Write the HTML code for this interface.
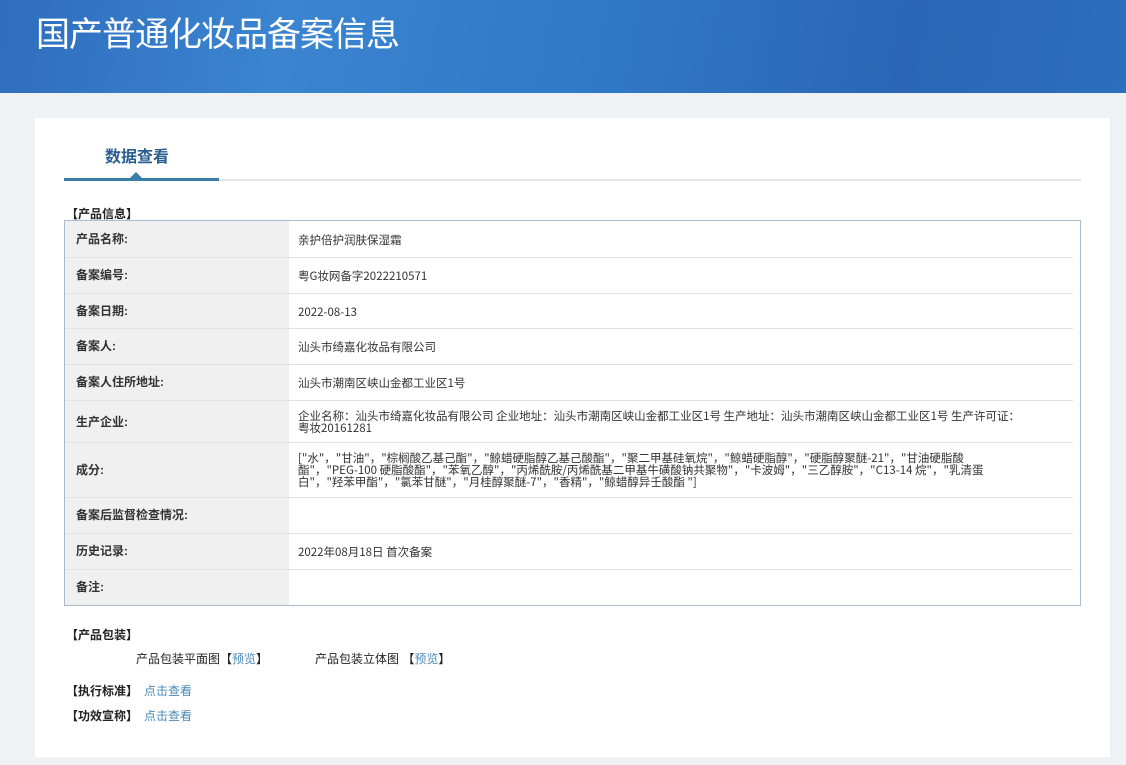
<!DOCTYPE html>
<html><head><meta charset="utf-8"><style>
*{margin:0;padding:0;box-sizing:border-box}
body{width:1126px;height:765px;overflow:hidden;background:#eef2f5;font-family:"Liberation Sans","Noto Sans CJK SC",sans-serif;color:#333;position:relative}
.hd{position:absolute;left:0;top:0;width:1126px;height:93px;background:linear-gradient(100deg,#2f6dbd 0%,#3a84d0 25%,#2f78c6 55%,#2a66b5 80%,#2c6fbd 100%)}
.hd h1{position:absolute;left:36px;top:7px;font-size:34px;font-weight:normal;color:#fff;letter-spacing:-1px;font-family:"Noto Sans CJK SC",sans-serif}
.card{position:absolute;left:35px;top:118px;width:1075px;height:639px;background:#fff}
.tab{position:absolute;left:105px;top:143px;font-size:16px;font-weight:bold;color:#2a5d8f}
.line{position:absolute;left:64px;top:179px;width:1017px;height:2px;background:#e3e6e9}
.act{position:absolute;left:64px;top:178px;width:155px;height:3px;background:#3a7fa8}
.tri{position:absolute;left:130px;top:172px;width:0;height:0;border-left:6px solid transparent;border-right:6px solid transparent;border-bottom:6px solid #3a7fa8}
.sec{position:absolute;font-size:12px;font-weight:bold;color:#222}
.tbl{position:absolute;left:64px;top:220px;width:1017px;height:386px;border:1px solid #aabbd0}
.lab{position:absolute;left:0;top:0;width:224px;height:384px;background:#f0f0f0}
.row{position:absolute;left:0;width:1008px;border-bottom:1px solid #e2e2e2}
.row .l{position:absolute;left:11px;font-size:12px;font-weight:bold;color:#333;line-height:14px}
.row .v{position:absolute;left:233px;font-size:11.5px;color:#333;line-height:12px;width:735px;font-family:"Noto Sans CJK SC",sans-serif}
.t{position:absolute;font-size:12px;color:#222}
.a{color:#4a8ab8}
</style></head><body>
<div class="hd"><h1>国产普通化妆品备案信息</h1></div>
<div class="card"></div>
<div class="tab">数据查看</div>
<div class="line"></div><div class="act"></div><div class="tri"></div>
<div class="sec" style="left:66px;top:205px">【产品信息】</div>
<div class="tbl">
<div class="lab"></div>
<div class="row" style="top:0;height:37px"><span class="l" style="top:11px">产品名称:</span><span class="v" style="top:13px">亲护倍护润肤保湿霜</span></div>
<div class="row" style="top:37px;height:36px"><span class="l" style="top:10px">备案编号:</span><span class="v" style="top:12px">粤G妆网备字2022210571</span></div>
<div class="row" style="top:73px;height:35px"><span class="l" style="top:10px">备案日期:</span><span class="v" style="top:12px">2022-08-13</span></div>
<div class="row" style="top:108px;height:36px"><span class="l" style="top:10px">备案人:</span><span class="v" style="top:12px">汕头市绮嘉化妆品有限公司</span></div>
<div class="row" style="top:144px;height:36px"><span class="l" style="top:10px">备案人住所地址:</span><span class="v" style="top:12px">汕头市潮南区峡山金都工业区1号</span></div>
<div class="row" style="top:180px;height:42px"><span class="l" style="top:14px">生产企业:</span><span class="v" style="top:9px;width:732px">企业名称：汕头市绮嘉化妆品有限公司 企业地址：汕头市潮南区峡山金都工业区1号 生产地址：汕头市潮南区峡山金都工业区1号 生产许可证：粤妆20161281</span></div>
<div class="row" style="top:222px;height:55px"><span class="l" style="top:20px">成分:</span><span class="v" style="top:9px;font-size:11.5px;line-height:12px;width:722px">["水"，"甘油"，"棕榈酸乙基己酯"，"鲸蜡硬脂醇乙基己酸酯"，"聚二甲基硅氧烷"，"鲸蜡硬脂醇"，"硬脂醇聚醚-21"，"甘油硬脂酸酯"，"PEG-100 硬脂酸酯"，"苯氧乙醇"，"丙烯酰胺/丙烯酰基二甲基牛磺酸钠共聚物"，"卡波姆"，"三乙醇胺"，"C13-14 烷"，"乳清蛋白"，"羟苯甲酯"，"氯苯甘醚"，"月桂醇聚醚-7"，"香精"，"鲸蜡醇异壬酸酯 "]</span></div>
<div class="row" style="top:277px;height:36px"><span class="l" style="top:10px">备案后监督检查情况:</span></div>
<div class="row" style="top:313px;height:36px"><span class="l" style="top:10px">历史记录:</span><span class="v" style="top:12px">2022年08月18日 首次备案</span></div>
<div class="row" style="top:349px;height:35px;border-bottom:none"><span class="l" style="top:10px">备注:</span></div>
</div>
<div class="sec" style="left:66px;top:626px">【产品包装】</div>
<div class="t" style="left:136px;top:650px">产品包装平面图【<span class="a">预览</span>】</div>
<div class="t" style="left:315px;top:650px">产品包装立体图 【<span class="a">预览</span>】</div>
<div class="sec" style="left:66px;top:682px">【执行标准】</div><div class="t a" style="left:144px;top:682px">点击查看</div>
<div class="sec" style="left:66px;top:707px">【功效宣称】</div><div class="t a" style="left:144px;top:707px">点击查看</div>
</body></html>
